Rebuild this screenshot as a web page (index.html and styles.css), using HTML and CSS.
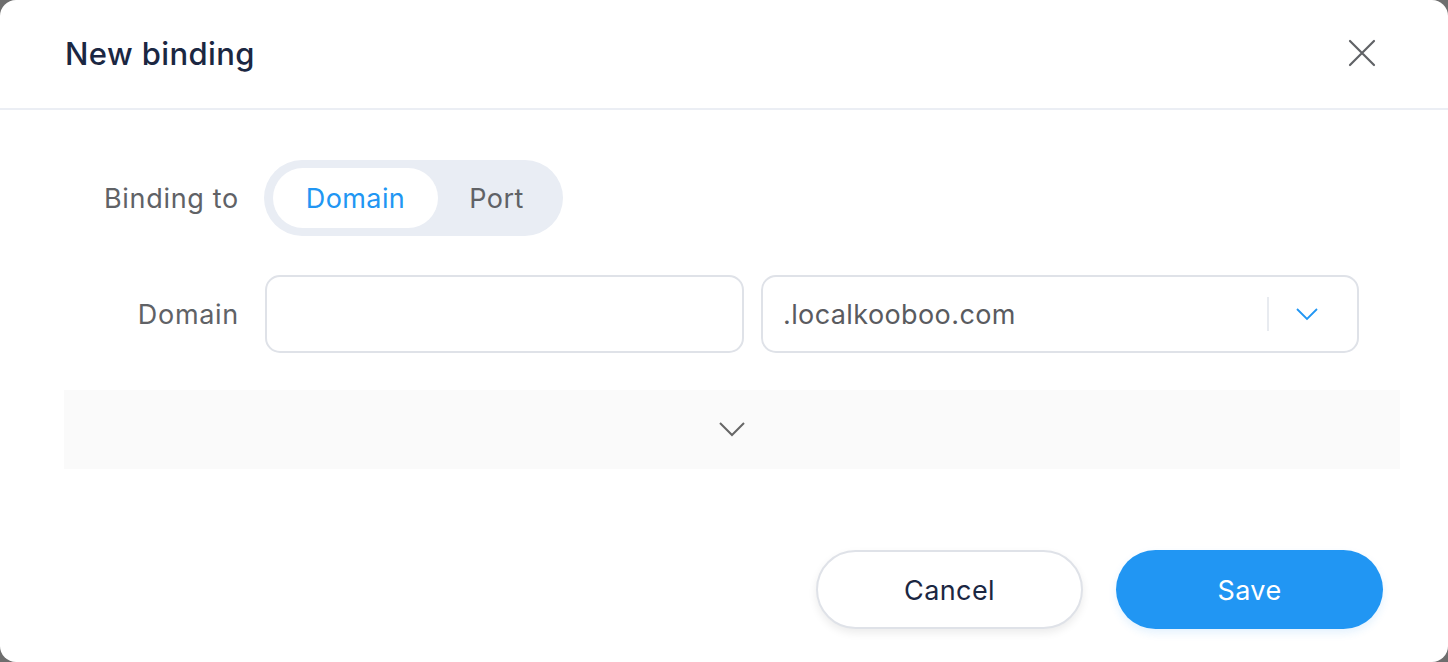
FILE: index.html
```html
<!DOCTYPE html>
<html lang="en">
<head>
<meta charset="utf-8">
<title>New binding</title>
<link rel="stylesheet" href="styles.css">
</head>
<body>
<div class="dialog">
  <header class="dialog-header">
    <h1 class="dialog-title">New binding</h1>
    <button class="close-btn" aria-label="Close">
      <svg width="28" height="28" viewBox="0 0 28 28"><path d="M2 2 L26 26 M26 2 L2 26" stroke="#606266" stroke-width="2.2" fill="none" stroke-linecap="round"/></svg>
    </button>
  </header>
  <div class="dialog-body">
    <div class="form-row row-toggle">
      <label class="form-label">Binding to</label>
      <div class="segmented">
        <span class="seg seg-active">Domain</span>
        <span class="seg seg-port">Port</span>
      </div>
    </div>
    <div class="form-row row-domain">
      <label class="form-label">Domain</label>
      <div class="field field-input"></div>
      <div class="field field-select">
        <span class="select-value">.localkooboo.com</span>
        <span class="select-divider"></span>
        <span class="select-arrow">
          <svg width="24" height="14" viewBox="0 0 24 14"><path d="M2 2 L12 12 L22 2" stroke="#2196f3" stroke-width="1.8" fill="none"/></svg>
        </span>
      </div>
    </div>
    <div class="advanced">
      <svg width="28" height="16" viewBox="0 0 28 16"><path d="M2 2 L14 14 L26 2" stroke="#666" stroke-width="2" fill="none"/></svg>
    </div>
  </div>
  <footer class="dialog-footer">
    <button class="btn btn-cancel">Cancel</button>
    <button class="btn btn-save">Save</button>
  </footer>
</div>
</body>
</html>
```

FILE: styles.css
```css
* { box-sizing: border-box; }
html, body { margin: 0; padding: 0; }
body {
  background: #6e6e6e;
  font-family: Inter, "Liberation Sans", sans-serif;
  width: 1448px;
  height: 662px;
  overflow: hidden;
}
.dialog {
  width: 1448px;
  height: 662px;
  background: #fff;
  border-radius: 16px;
  display: flex;
  flex-direction: column;
}
.dialog-header {
  height: 110px;
  border-bottom: 2px solid #ebeef4;
  display: flex;
  align-items: center;
  justify-content: space-between;
  padding: 0 72px 2px 65px;
}
.dialog-title {
  margin: 0;
  font-size: 31px;
  font-weight: 500;
  color: #1b2742;
  letter-spacing: 0.4px;
}
.close-btn {
  border: 0;
  background: none;
  padding: 0;
  width: 28px;
  height: 28px;
  display: flex;
}
.dialog-body {
  padding: 50px 48px 0 64px;
  display: flex;
  flex-direction: column;
}
.form-row {
  display: flex;
  align-items: center;
}
.form-label {
  width: 175px;
  text-align: right;
  font-size: 27px;
  color: #606266;
  margin-right: 25px;
  letter-spacing: 0.7px;
}
.row-toggle { height: 76px; }
.segmented {
  display: flex;
  background: #e9edf4;
  border-radius: 38px;
  height: 76px;
  padding: 8px 8px 8px 9px;
}
.seg {
  display: flex;
  align-items: center;
  justify-content: center;
  font-size: 27px;
  border-radius: 30px;
  letter-spacing: 0.4px;
}
.seg-active {
  width: 165px;
  background: #fff;
  color: #2196f3;
}
.seg-port {
  width: 117px;
  color: #606266;
}
.row-domain {
  margin-top: 39px;
  height: 78px;
}
.field {
  height: 78px;
  border: 2px solid #dfe2e8;
  border-radius: 15px;
  background: #fff;
}
.field-input {
  width: 479px;
  margin-left: 1px;
}
.field-select {
  width: 598px;
  margin-left: 17px;
  display: flex;
  align-items: center;
  padding-left: 20px;
}
.select-value {
  flex: 1;
  font-size: 27px;
  color: #5a5b5f;
  letter-spacing: 0.4px;
}
.select-divider {
  width: 2px;
  height: 34px;
  background: #e8ebf0;
}
.select-arrow {
  width: 88px;
  display: flex;
  justify-content: center;
  padding-right: 12px;
}
.advanced {
  margin-top: 37px;
  height: 79px;
  background: #fafafa;
  display: flex;
  align-items: center;
  justify-content: center;
  padding-bottom: 2px;
}
.dialog-footer {
  display: flex;
  justify-content: flex-end;
  gap: 33px;
  padding: 81px 65px 0 0;
}
.btn {
  height: 79px;
  border-radius: 40px;
  font-family: Inter, "Liberation Sans", sans-serif;
  font-size: 27px;
  letter-spacing: 0.4px;
  cursor: pointer;
  padding-top: 3px;
}
.btn-cancel {
  width: 267px;
  background: #fff;
  border: 2px solid #dfe2e8;
  color: #1b2742;
  box-shadow: 0 4px 8px rgba(0, 0, 0, 0.08);
}
.btn-save {
  width: 267px;
  background: #2196f3;
  border: 0;
  color: #fff;
  box-shadow: 0 4px 8px rgba(33, 150, 243, 0.12);
}
```
